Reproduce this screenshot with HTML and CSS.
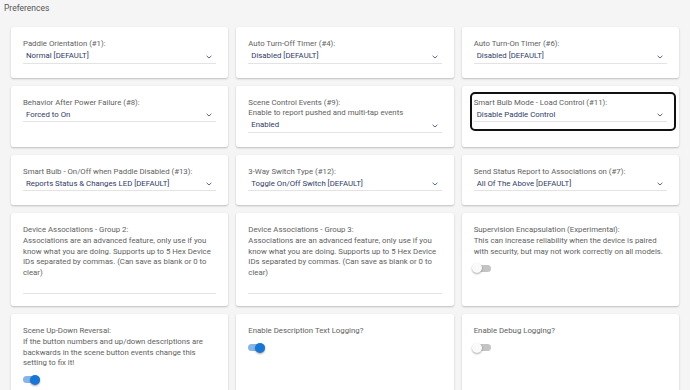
FILE: index.html
```html
<!DOCTYPE html>
<html lang="en">
<head>
    <meta charset="UTF-8">
    <meta name="viewport" content="width=device-width, initial-scale=1.0">
    <title>Preferences</title>
    <link rel="stylesheet" href="styles.css">
</head>
<body>
    <h1 class="page-title">Preferences</h1>

    <div class="pref-grid">
        <!-- row 1 -->
        <div class="card">
            <div class="field">
                <div class="field-label">Paddle Orientation (#1):</div>
                <div class="select"><span class="select-value">Normal [DEFAULT]</span><svg class="chevron" viewBox="0 0 6 4"><polyline points="0.6,0.8 3,3 5.4,0.8"/></svg></div>
            </div>
        </div>
        <div class="card">
            <div class="field">
                <div class="field-label">Auto Turn-Off Timer (#4):</div>
                <div class="select"><span class="select-value">Disabled [DEFAULT]</span><svg class="chevron" viewBox="0 0 6 4"><polyline points="0.6,0.8 3,3 5.4,0.8"/></svg></div>
            </div>
        </div>
        <div class="card">
            <div class="field">
                <div class="field-label">Auto Turn-On Timer (#6):</div>
                <div class="select"><span class="select-value">Disabled [DEFAULT]</span><svg class="chevron" viewBox="0 0 6 4"><polyline points="0.6,0.8 3,3 5.4,0.8"/></svg></div>
            </div>
        </div>

        <!-- row 2 -->
        <div class="card">
            <div class="field">
                <div class="field-label">Behavior After Power Failure (#8):</div>
                <div class="select"><span class="select-value">Forced to On</span><svg class="chevron" viewBox="0 0 6 4"><polyline points="0.6,0.8 3,3 5.4,0.8"/></svg></div>
            </div>
        </div>
        <div class="card">
            <div class="field">
                <div class="field-label">Scene Control Events (#9):<br>Enable to report pushed and multi-tap events</div>
                <div class="select"><span class="select-value">Enabled</span><svg class="chevron" viewBox="0 0 6 4"><polyline points="0.6,0.8 3,3 5.4,0.8"/></svg></div>
            </div>
        </div>
        <div class="card">
            <div class="field focused">
                <div class="field-label">Smart Bulb Mode - Load Control (#11):</div>
                <div class="select"><span class="select-value">Disable Paddle Control</span><svg class="chevron" viewBox="0 0 6 4"><polyline points="0.6,0.8 3,3 5.4,0.8"/></svg></div>
            </div>
        </div>

        <!-- row 3 -->
        <div class="card">
            <div class="field">
                <div class="field-label">Smart Bulb - On/Off when Paddle Disabled (#13):</div>
                <div class="select"><span class="select-value">Reports Status &amp; Changes LED [DEFAULT]</span><svg class="chevron" viewBox="0 0 6 4"><polyline points="0.6,0.8 3,3 5.4,0.8"/></svg></div>
            </div>
        </div>
        <div class="card">
            <div class="field">
                <div class="field-label">3-Way Switch Type (#12):</div>
                <div class="select"><span class="select-value">Toggle On/Off Switch [DEFAULT]</span><svg class="chevron" viewBox="0 0 6 4"><polyline points="0.6,0.8 3,3 5.4,0.8"/></svg></div>
            </div>
        </div>
        <div class="card">
            <div class="field">
                <div class="field-label">Send Status Report to Associations on (#7):</div>
                <div class="select"><span class="select-value">All Of The Above [DEFAULT]</span><svg class="chevron" viewBox="0 0 6 4"><polyline points="0.6,0.8 3,3 5.4,0.8"/></svg></div>
            </div>
        </div>

        <!-- row 4 -->
        <div class="card">
            <div class="field">
                <div class="field-label">Device Associations - Group 2:<br>Associations are an advanced feature, only use if you know what you are doing. Supports up to 5 Hex Device IDs separated by commas. (Can save as blank or 0 to clear)</div>
                <div class="text-input"></div>
            </div>
        </div>
        <div class="card">
            <div class="field">
                <div class="field-label">Device Associations - Group 3:<br>Associations are an advanced feature, only use if you know what you are doing. Supports up to 5 Hex Device IDs separated by commas. (Can save as blank or 0 to clear)</div>
                <div class="text-input"></div>
            </div>
        </div>
        <div class="card">
            <div class="field">
                <div class="field-label">Supervision Encapsulation (Experimental):<br>This can increase reliability when the device is paired with security, but may not work correctly on all models.</div>
                <div class="switch"><span class="switch-track"></span><span class="switch-thumb"></span></div>
            </div>
        </div>

        <!-- row 5 -->
        <div class="card">
            <div class="field">
                <div class="field-label">Scene Up-Down Reversal:<br>If the button numbers and up/down descriptions are backwards in the scene button events change this setting to fix it!</div>
                <div class="switch on"><span class="switch-track"></span><span class="switch-thumb"></span></div>
            </div>
        </div>
        <div class="card">
            <div class="field">
                <div class="field-label">Enable Description Text Logging?</div>
                <div class="switch on"><span class="switch-track"></span><span class="switch-thumb"></span></div>
            </div>
        </div>
        <div class="card">
            <div class="field">
                <div class="field-label">Enable Debug Logging?</div>
                <div class="switch"><span class="switch-track"></span><span class="switch-thumb"></span></div>
            </div>
        </div>
    </div>
</body>
</html>
```

FILE: styles.css
```css
* {
    box-sizing: border-box;
    font-family: Roboto, 'Noto Sans', sans-serif;
}

body {
    margin: 0;
    background: #f5f5f5;
    color: #616161;
}

.page-title {
    font-size: 8.5px;
    font-weight: 400;
    line-height: 10px;
    margin: 0;
    padding: 3px 4px 14px;
    color: #555;
}

.pref-grid {
    display: grid;
    grid-template-columns: repeat(3, 1fr);
    gap: 8px;
    padding: 0 11px;
}

.card {
    background: #fff;
    border-radius: 2px;
    box-shadow: 0 1px 2px rgba(0, 0, 0, 0.22), 0 0 1px rgba(0, 0, 0, 0.06);
    padding: 12px 12px 14px;
}

.field {
    font-size: 7.8px;
    line-height: 10.6px;
}

.field.focused {
    margin: -6px -9px -9px -4px;
    padding: 4px 7px 7px 2px;
    border: 2px solid #111;
    border-radius: 5px;
}

.field-label {
    color: #616161;
}

.select {
    display: flex;
    align-items: center;
    justify-content: space-between;
    height: 13px;
    margin-top: 1px;
    padding: 0 4px 0 3px;
    border-bottom: 1px solid #e3e3e3;
}

.select-value {
    color: #2f3b66;
}

.chevron {
    width: 6px;
    height: 4px;
    fill: none;
    stroke: #4a5578;
    stroke-width: 0.9;
}

.text-input {
    height: 13px;
    margin: 3px 0 -2px;
    border-bottom: 1.5px solid #e3e3e3;
}

.switch {
    position: relative;
    width: 17px;
    height: 10px;
    margin-top: 6px;
}

.switch-track {
    position: absolute;
    left: 0;
    top: 1.5px;
    width: 17px;
    height: 7px;
    border-radius: 4px;
    background: #c4c4c4;
}

.switch-thumb {
    position: absolute;
    left: -2px;
    top: 0;
    width: 10px;
    height: 10px;
    border-radius: 50%;
    background: #fafafa;
    box-shadow: 0 1px 2px rgba(0, 0, 0, 0.35);
}

.switch.on .switch-track {
    background: #86b6e8;
}

.switch.on .switch-thumb {
    left: 7px;
    background: #1976d2;
}
```
